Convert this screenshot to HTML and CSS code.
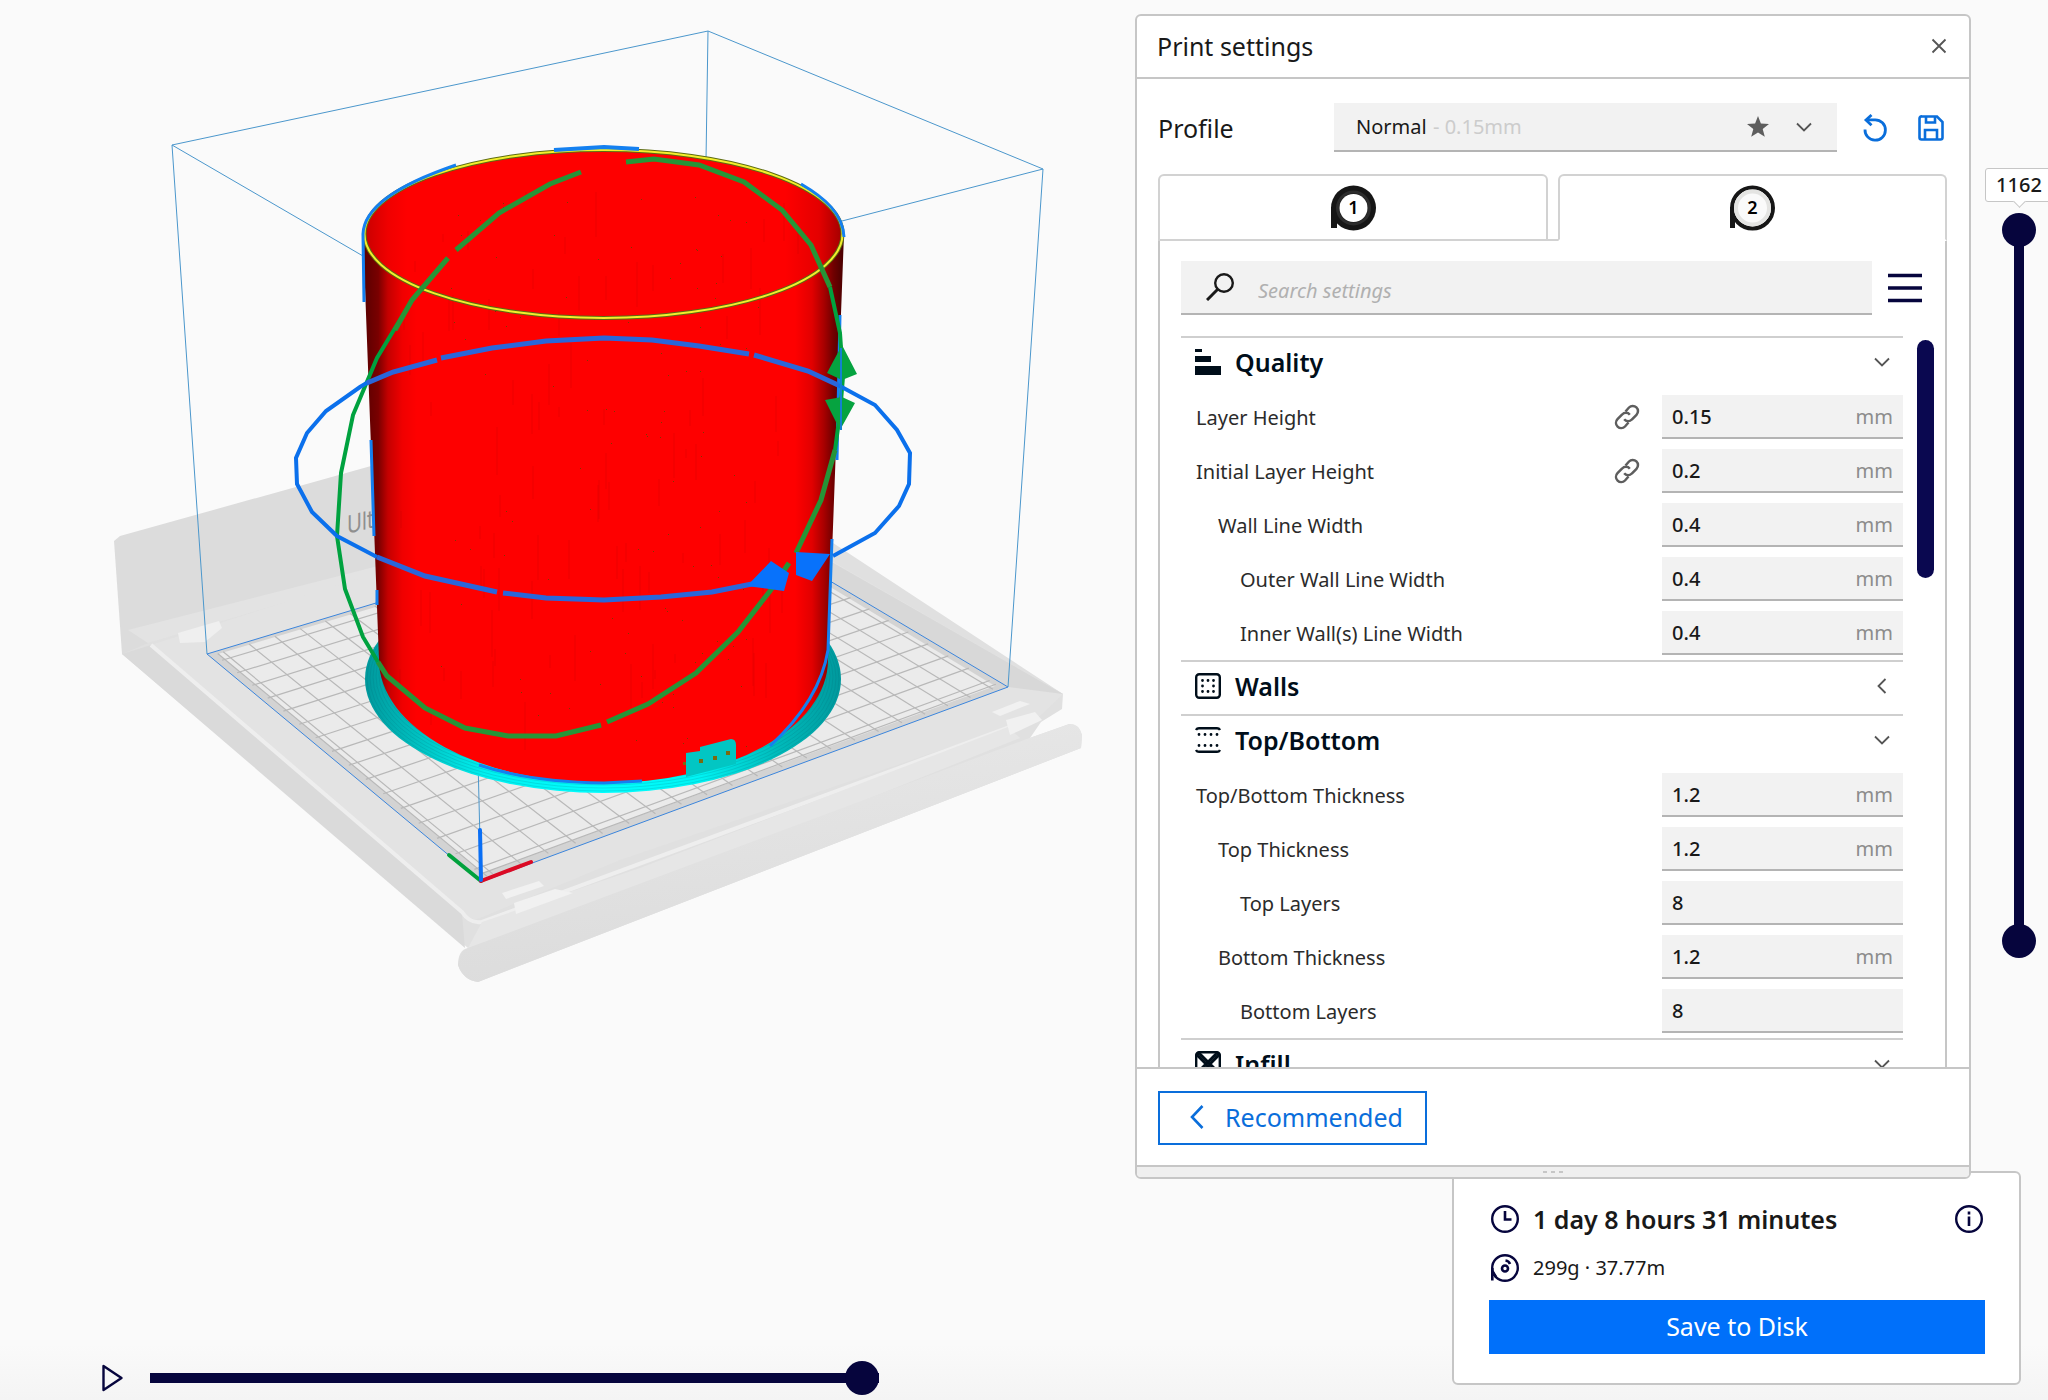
FILE: index.html
```html
<!DOCTYPE html>
<html lang="en">
<head>
<meta charset="utf-8">
<title>Print preview</title>
<link rel="stylesheet" href="styles.css">
</head>
<body>
<svg class="symbols" aria-hidden="true">
  <symbol id="chevron-down" viewBox="0 0 16 16"><path d="M1 4.500 8 11.500 15 4.500" fill="none" stroke="currentColor" stroke-width="1.800"/></symbol>
  <symbol id="chevron-left" viewBox="0 0 16 16"><path d="M11.500 1 4.500 8l7 7" fill="none" stroke="currentColor" stroke-width="1.800"/></symbol>
  <symbol id="link" viewBox="0 0 26 26"><g fill="none" stroke="currentColor" stroke-width="2.500"><path d="M11.500 7.500 15 3.500a5.200 5.200 0 0 1 7.500 7.300L17.800 15.500a5 5 0 0 1-7.600-.2"/><path d="M14.500 18.500 11 22.500a5.200 5.200 0 0 1-7.500-7.300L8.200 10.500a5 5 0 0 1 7.600.2"/></g></symbol>
</svg>
<main class="app">
  <section class="viewport" aria-label="Preview">
    <svg class="scene" viewBox="0 0 1135 1320" role="img" aria-label="Sliced cylinder on the build plate">
      <defs>
        <linearGradient id="wall" gradientUnits="userSpaceOnUse" x1="364" x2="843" y1="0" y2="0">
          <stop offset="0" stop-color="#5a0000"/><stop offset=".03" stop-color="#7a0000"/><stop offset=".05" stop-color="#c40000"/><stop offset=".08" stop-color="#f00000"/><stop offset=".11" stop-color="#fe0000"/>
          <stop offset=".9" stop-color="#fe0000"/><stop offset=".935" stop-color="#e20000"/><stop offset=".96" stop-color="#a80000"/><stop offset=".98" stop-color="#700000"/><stop offset="1" stop-color="#4a0000"/>
        </linearGradient>
        <linearGradient id="inside" gradientUnits="userSpaceOnUse" x1="364" x2="843" y1="0" y2="0">
          <stop offset="0" stop-color="#c80000"/><stop offset=".05" stop-color="#f00000"/><stop offset=".09" stop-color="#fe0000"/>
          <stop offset=".88" stop-color="#fe0000"/><stop offset=".95" stop-color="#e40000"/><stop offset="1" stop-color="#a00000"/>
        </linearGradient>
        <linearGradient id="brim" gradientUnits="userSpaceOnUse" x1="365" x2="842" y1="0" y2="0">
          <stop offset="0" stop-color="#00989c"/><stop offset=".12" stop-color="#00c4c4"/><stop offset=".25" stop-color="#00f0f0"/><stop offset=".5" stop-color="#00ffff"/>
          <stop offset=".7" stop-color="#00f4f4"/><stop offset=".86" stop-color="#00bcbc"/><stop offset="1" stop-color="#00989c"/>
        </linearGradient>
        <linearGradient id="bar" x1="0" y1="0" x2=".2" y2="1"><stop offset="0" stop-color="#e8e8e8"/><stop offset="1" stop-color="#dcdcdc"/></linearGradient>
        <clipPath id="body"><path d="M363 234A240 84 0 0 1 844 234L828 660A224 123 0 0 1 379 660Z"/></clipPath>
      </defs>

      <!-- print bed -->
      <path d="M122 654 114 541 120 536 371 466 400 560 400 700Z" fill="#dcdcdc"/>
      <path d="M128 630 378 566 378 620 151 645Z" fill="#e3e3e3"/>
      <path d="M122 654 151 642 700 480 830 541 1063 694 1062 709 1041 722 1030 738 1069 724Q1079 724 1082 735L1081 748 478 982Q463 980 458 965 458 950 468 948Z" fill="#e0e0e0"/>
      <path d="M151 645 370 575 830 560 1063 694 1040 716 620 860 475 920 462 913Z" fill="#e3e3e3"/>
      <path d="M122 654 151 645 462 913 465 948Z" fill="#dadada"/>
      <path d="M151 645 462 912Q470 924 482 922L1010 727" fill="none" stroke="#eeeeee" stroke-width="4"/>
      <path d="M482 922 640 868 1008 727 1020 738 640 890 468 948Z" fill="#e6e6e6"/>
      <path d="M468 948 1035 736 1070 724Q1080 724 1082 736L1081 748 478 982Q463 980 458 965 459 952 468 948Z" fill="url(#bar)"/>
      <path d="M830 561 1063 694 1008 687 830 581Z" fill="#d8d8d8"/>
      <path d="M502 893 539 881 544 886 506 899ZM514 903 555 889 573 893 516 914ZM992 712 1020 701 1030 704 1000 716ZM1006 720 1035 712 1042 720 1010 735Z" fill="#f1f1f1"/>
      <path d="M178 633 219 621 222 628 205 642 180 643Z" fill="#efefef"/>
      <path d="M207 654 702 505 1008 687 481 882Z" fill="#d3d3d3"/>
      <path d="M218 654 702 510 995 686 483 873Z" fill="#ebebeb"/>
      <g id="grid" fill="none" stroke="#b8b8b8" stroke-width="1.200"></g>
      <text class="brand" transform="matrix(1 -.25 0 1.250 347 534)">Ultimaker</text>

      <!-- build volume -->
      <g fill="none" stroke="#4b97cc">
        <path d="M172 145 708 31 1043 169 842 221M172 145 363 256M708 31 706 160M172 145 207 654M1043 169 1008 687M478 760 481 882"/>
        <path d="M376 603 207 654 481 882 1008 687 830 581" stroke="#3b85dc"/>
      </g>
      <g fill="none" stroke-width="4" stroke-linecap="round">
        <path d="M481 881 449 855" stroke="#00a13c"/><path d="M481 881 531 862" stroke="#dc0a24"/><path d="M481 880 480 830" stroke="#0a6ff5"/>
      </g>

      <!-- brim -->
      <ellipse cx="603" cy="679" rx="238" ry="114" fill="url(#brim)"/>
      <g id="brim-lines" fill="none" stroke="#006c72" stroke-opacity=".18"></g>

      <!-- sliced model -->
      <path d="M363 234 379 660A224 123 0 0 0 828 660L844 234Z" fill="url(#wall)"/>
      <ellipse cx="603.500" cy="234" rx="240" ry="84" fill="url(#inside)"/>
      <g id="layers" clip-path="url(#body)"></g>
      <ellipse cx="603.500" cy="234" rx="239" ry="84" fill="none" stroke="#5c6b10" stroke-width="4"/>
      <ellipse cx="603.500" cy="234" rx="239" ry="84" fill="none" stroke="#f3ee2c" stroke-width="2"/>
      <g fill="none" stroke="#1480f0" stroke-width="3">
        <path d="M554 150 604 147 639 149" stroke-width="4"/>
        <path d="M456 165C400 184 364 207 363 234L364 302M371 440 374 536M377 590V605"/>
        <path d="M801 184C825 198 843 214 844 237M840 315 837 460M832 539 828 650Q820 700 770 746"/>
        <path d="M479 765Q530 782 604 783L642 781"/>
      </g>
      <path d="M686 777V753L700 751V747L731 739Q736 739 736 745V764Z" fill="#02c6c3"/>
      <path d="M699 759h4v4h-4zM713 756h4v4h-4zM726 751h4v4h-4zM683 762h3v3h-3z" fill="#7a6a10"/>

      <!-- rotation rings -->
      <g fill="none" stroke="#00a23f" stroke-width="4">
        <path d="M412 300 377 358 353 415 341 473 337 536 345 589 363 637 378 662"/>
        <path d="M830 287 840 333 843 377 840 413 835 450"/>
      </g>
      <g fill="none" stroke="#269537" stroke-width="5">
        <path d="M378 662 387 676 425 708 465 728 508 736 556 736 601 725M607 722 648 704 696 673 738 632 770 591 789 563M796 553 821 500 835 450"/>
        <path d="M581 172 550 184 499 213 456 250M448 258 412 300 395 330M626 162 654 159 699 165 744 182 782 210 811 245 830 287"/>
      </g>
      <g fill="none" stroke="#0b70ec" stroke-width="4">
        <path d="M370 381 360 387 326 411 307 433 296 458 297 484 312 512 337 536 377 557M833 556 875 533 899 506 909 484 910 453 897 430 875 405 838 385"/>
      </g>
      <g fill="none" stroke="#2a66da" stroke-width="5">
        <path d="M377 557 425 576 497 592M503 593 546 598 604 600 661 597 712 592 757 583M838 385 808 371 754 355M749 354 699 346 652 340 604 338 546 341 492 348 441 358M437 360 393 372 367 383"/>
      </g>
      <path d="M771 561 789 573 784 591 747 586ZM796 552 830 554 812 581 796 575Z" fill="#0872fb"/>
      <path d="M842 345 857 374 842 380 827 373ZM825 400 842 397 855 403 840 430Z" fill="#06a340"/>
      <path d="M841 348V430" stroke="#1480d0" stroke-width="2"/>
    </svg>
    <div class="player">
      <button class="icon-button" type="button" aria-label="Play">
        <svg class="play" viewBox="0 0 24 28"><path d="M3 2v24L21 14Z" fill="none" stroke="currentColor" stroke-width="2.400" stroke-linejoin="round"/></svg>
      </button>
      <input class="range path-range" type="range" min="0" max="100" value="100" aria-label="Path position">
    </div>
  </section>

  <div class="side">
    <section class="panel settings" aria-labelledby="settings-title">
      <header class="settings-head">
        <h1 class="title" id="settings-title">Print settings</h1>
        <button class="icon-button muted" type="button" aria-label="Close">
          <svg class="icon-small" viewBox="0 0 16 16"><path d="M1.500 1.500l13 13M14.500 1.500l-13 13" fill="none" stroke="currentColor" stroke-width="1.800"/></svg>
        </button>
      </header>

      <div class="profile">
        <label class="title profile-label" for="profile">Profile</label>
        <div class="profile-field">
          <select class="profile-select" id="profile"><option>Normal</option><option>Fine</option><option>Draft</option></select>
          <span class="profile-detail">- 0.15mm</span>
          <span class="profile-icons">
            <svg class="star" viewBox="0 0 22 22"><path d="M11 0l2.900 7.500 8.100.4-6.300 5.100 2.100 7.800L11 16.400l-6.800 4.400 2.100-7.800L0 7.900l8.100-.4Z" fill="currentColor"/></svg>
            <svg class="icon-small"><use href="#chevron-down"/></svg>
          </span>
        </div>
        <button class="icon-button blue" type="button" aria-label="Reset profile">
          <svg class="icon" viewBox="0 0 26 28"><g fill="none" stroke="currentColor" stroke-width="2.800"><path d="M3 15.500a10.200 10.200 0 1 0 10.200-9.700H4"/><path d="M9.500 1 4 6l5.500 5.200"/></g></svg>
        </button>
        <button class="icon-button blue" type="button" aria-label="Save profile">
          <svg class="icon" viewBox="0 0 26 28"><g fill="none" stroke="currentColor" stroke-width="2.600"><path d="M4 2.500H19L24.500 8V23.500a2 2 0 0 1-2 2H3.500a2 2 0 0 1-2-2V4.500a2 2 0 0 1 2.500-2Z"/><path d="M8 3v5.500h9V3M7 25v-9h12v9"/></g></svg>
        </button>
      </div>

      <div class="tabs" role="tablist">
        <button class="tab" type="button" role="tab" aria-selected="false" aria-label="Extruder 1">
          <svg class="spool" viewBox="0 0 46 46"><path d="M1 43V22h6v21Z" fill="#161616"/><circle cx="23.500" cy="23" r="22.500" fill="#161616"/><circle cx="23.500" cy="23" r="16" fill="none" stroke="#2c2c2c" stroke-width="3"/><circle cx="23.500" cy="23" r="14" fill="#fff"/><text class="spool-no" x="23.500" y="29">1</text></svg>
        </button>
        <span class="tab-gap"></span>
        <button class="tab tab-on" type="button" role="tab" aria-selected="true" aria-label="Extruder 2">
          <svg class="spool" viewBox="0 0 46 46"><path d="M1 43V22h5v21Z" fill="#161616"/><circle cx="23.500" cy="23" r="20.500" fill="#fafafa" stroke="#161616" stroke-width="4"/><circle cx="23.500" cy="23" r="16.500" fill="none" stroke="#e4e4e2" stroke-width="4"/><text class="spool-no" x="23.500" y="29">2</text></svg>
        </button>
      </div>

      <div class="sheet">
        <div class="search-row">
          <label class="search">
            <svg class="search-icon" viewBox="0 0 28 28"><circle cx="18" cy="10" r="8.800" fill="none" stroke="currentColor" stroke-width="2.400"/><path d="M11.500 16.500 1 27" stroke="currentColor" stroke-width="3"/></svg>
            <input class="search-input" type="text" placeholder="Search settings" aria-label="Search settings">
          </label>
          <button class="icon-button navy" type="button" aria-label="Visibility menu">
            <svg class="burger" viewBox="0 0 34 30"><path d="M0 2.500H34M0 15H34M0 27.500H34" stroke="currentColor" stroke-width="3.600"/></svg>
          </button>
        </div>

        <div class="list-wrap">
          <div class="list">
            <button class="category" type="button" aria-expanded="true">
              <svg class="cat-icon" viewBox="0 0 26 26"><path d="M0 0h7v3H0zM0 7h16v6H0zM0 17h26v9H0z" fill="currentColor"/></svg>
              <span class="cat-name">Quality</span><svg class="icon-small"><use href="#chevron-down"/></svg>
            </button>
            <div class="row"><label class="name" for="s1">Layer Height</label><svg class="link"><use href="#link"/></svg><span class="field"><input class="value" id="s1" value="0.15"><span class="unit">mm</span></span></div>
            <div class="row"><label class="name" for="s2">Initial Layer Height</label><svg class="link"><use href="#link"/></svg><span class="field"><input class="value" id="s2" value="0.2"><span class="unit">mm</span></span></div>
            <div class="row"><label class="name in-1" for="s3">Wall Line Width</label><span class="field"><input class="value" id="s3" value="0.4"><span class="unit">mm</span></span></div>
            <div class="row"><label class="name in-2" for="s4">Outer Wall Line Width</label><span class="field"><input class="value" id="s4" value="0.4"><span class="unit">mm</span></span></div>
            <div class="row"><label class="name in-2" for="s5">Inner Wall(s) Line Width</label><span class="field"><input class="value" id="s5" value="0.4"><span class="unit">mm</span></span></div>
            <button class="category" type="button" aria-expanded="false">
              <svg class="cat-icon" viewBox="0 0 26 26"><rect x="1.200" y="1.200" width="23.600" height="23.600" rx="3" fill="none" stroke="currentColor" stroke-width="2.400"/><path d="M7.500 7.500h.01M13 7.500h.01M18.500 7.500h.01M7.500 13h.01M18.500 13h.01M7.500 18.500h.01M13 18.500h.01M18.500 18.500h.01" stroke="currentColor" stroke-width="2.800" stroke-linecap="round"/></svg>
              <span class="cat-name">Walls</span><svg class="icon-small"><use href="#chevron-left"/></svg>
            </button>
            <button class="category" type="button" aria-expanded="true">
              <svg class="cat-icon" viewBox="0 0 26 26"><path d="M1 3Q2 1.200 4 1.200H22Q24 1.200 25 3M1 23Q2 24.800 4 24.800H22Q24 24.800 25 23" fill="none" stroke="currentColor" stroke-width="2.400"/><path d="M4 7.500h.01M10 7.500h.01M16 7.500h.01M22 7.500h.01M4 18.500h.01M10 18.500h.01M16 18.500h.01M22 18.500h.01" stroke="currentColor" stroke-width="2.800" stroke-linecap="round"/></svg>
              <span class="cat-name">Top/Bottom</span><svg class="icon-small"><use href="#chevron-down"/></svg>
            </button>
            <div class="row"><label class="name" for="s6">Top/Bottom Thickness</label><span class="field"><input class="value" id="s6" value="1.2"><span class="unit">mm</span></span></div>
            <div class="row"><label class="name in-1" for="s7">Top Thickness</label><span class="field"><input class="value" id="s7" value="1.2"><span class="unit">mm</span></span></div>
            <div class="row"><label class="name in-2" for="s8">Top Layers</label><span class="field"><input class="value" id="s8" value="8"></span></div>
            <div class="row"><label class="name in-1" for="s9">Bottom Thickness</label><span class="field"><input class="value" id="s9" value="1.2"><span class="unit">mm</span></span></div>
            <div class="row"><label class="name in-2" for="s10">Bottom Layers</label><span class="field"><input class="value" id="s10" value="8"></span></div>
            <button class="category" type="button" aria-expanded="true">
              <svg class="cat-icon" viewBox="0 0 26 26"><rect x="1.200" y="1.200" width="23.600" height="23.600" rx="3" fill="none" stroke="currentColor" stroke-width="2.400"/><path d="M1 5 5 1M3 21 21 3M3 5 21 23M5 3 23 21M21 1 25 5M5 23 23 5" stroke="currentColor" stroke-width="2.800"/></svg>
              <span class="cat-name">Infill</span><svg class="icon-small"><use href="#chevron-down"/></svg>
            </button>
          </div>
          <div class="scroll-thumb"></div>
        </div>
      </div>

      <footer class="settings-foot">
        <button class="recommended" type="button">
          <svg class="back" viewBox="0 0 14 24"><path d="M12.500 1 2 12 12.500 23" fill="none" stroke="currentColor" stroke-width="2.600"/></svg>Recommended
        </button>
      </footer>
      <div class="grip"><i class="dot"></i><i class="dot"></i><i class="dot"></i></div>
    </section>

    <section class="panel output" aria-label="Print output">
      <div class="output-row">
        <svg class="info-icon" viewBox="0 0 28 28"><circle cx="14" cy="14" r="12.800" fill="none" stroke="currentColor" stroke-width="2.400"/><path d="M14 6v8.500h6.500" fill="none" stroke="currentColor" stroke-width="2.600"/></svg>
        <strong class="time">1 day 8 hours 31 minutes</strong>
        <button class="icon-button navy" type="button" aria-label="Details">
          <svg class="info-icon" viewBox="0 0 28 28"><circle cx="14" cy="14" r="12.800" fill="none" stroke="currentColor" stroke-width="2.400"/><path d="M14 11.500V21M14 6.500v3" stroke="currentColor" stroke-width="2.600"/></svg>
        </button>
      </div>
      <div class="output-row">
        <svg class="info-icon" viewBox="0 0 28 28"><circle cx="14" cy="14" r="12.800" fill="none" stroke="currentColor" stroke-width="2.400"/><path d="M1.300 14V26.500M1.300 17 5 23" fill="none" stroke="currentColor" stroke-width="2.600"/><circle cx="14" cy="14.500" r="3" fill="none" stroke="currentColor" stroke-width="2.600"/><path d="M14.500 6.500Q18 7 19 10" fill="none" stroke="currentColor" stroke-width="2.600"/></svg>
        <span class="material">299g · 37.77m</span>
      </div>
      <button class="save" type="button">Save to Disk</button>
    </section>
  </div>

  <aside class="layers" aria-label="Layers">
    <output class="layer-no">1162</output>
    <div class="layer-range">
      <input class="range vertical" type="range" min="1" max="1162" value="1162" aria-label="Top layer">
      <input class="range vertical" type="range" min="1" max="1162" value="1" aria-label="Bottom layer">
    </div>
  </aside>
</main>
<script src="scene.js"></script>
</body>
</html>
```
FILE: styles.css
```css
* { box-sizing: border-box; }

body {
  margin: 0;
  overflow: hidden;
  background: linear-gradient(#fafafa 0, #fafafa 96%, #f4f4f4 100%);
  color: #191919;
  font-family: "Noto Sans", "Open Sans", sans-serif;
  font-size: 20px;
}

button, input, select {
  margin: 0;
  padding: 0;
  border: 0;
  border-radius: 0;
  background: none;
  color: inherit;
  font: inherit;
}

svg { display: block; flex: none; }
.symbols { display: none; }

.app {
  display: grid;
  grid-template-columns: minmax(0, 1135fr) minmax(0, 836fr) 77px;
  height: 100vh;
}

/* preview */
.viewport { display: flex; flex-direction: column; justify-content: space-between; min-height: 0; }
.scene { width: 100%; }
.brand { font-family: Inter, sans-serif; font-size: 20px; fill: #8f8f8f; }
.player { display: flex; align-items: center; gap: 25px; padding: 0 256px 5px 100px; }
.play { width: 25px; height: 28px; color: #06053d; }

.icon-button { display: grid; place-items: center; flex: none; }
.muted { color: #555; }
.blue { color: #0a6edb; }
.navy { color: #06053d; }

.range { appearance: none; margin: 0; cursor: pointer; }
.range::-webkit-slider-thumb {
  appearance: none;
  width: 34px;
  height: 34px;
  border-radius: 50%;
  background: #06053d;
  pointer-events: auto;
}
.path-range { flex: 1; min-width: 0; height: 34px; }
.path-range::-webkit-slider-runnable-track {
  height: 34px;
  border-radius: 4px;
  background: linear-gradient(#06053d, #06053d) center / 100% 10px no-repeat;
}

/* panels */
.side { display: flex; flex-direction: column; height: 100vh; padding: 14px 0 15px; }
.panel { border: 2px solid #c6c6c6; border-radius: 6px; background: #fff; }
.settings {
  position: relative;
  z-index: 1;
  display: flex;
  flex: 1;
  flex-direction: column;
  min-height: 0;
  overflow: hidden;
}
.settings-head {
  display: flex;
  align-items: center;
  justify-content: space-between;
  height: 63px;
  padding: 0 22px 2px 20px;
  border-bottom: 2px solid #c6c6c6;
}
.title { margin: 0; font-size: 25px; font-weight: 400; }
.icon-small { width: 16px; height: 16px; color: #555; }

.profile { display: flex; align-items: center; padding: 24px 24px 22px 21px; }
.profile-label { width: 176px; }
.profile-field { position: relative; flex: 1; height: 49px; margin-right: 25px; border-bottom: 2px solid #b4b4b4; background: #f2f2f2; }
.profile-select { appearance: none; width: 100%; height: 100%; padding-left: 22px; outline: 0; }
.profile-detail { position: absolute; top: 0; left: 99px; line-height: 47px; color: #ccc; pointer-events: none; }
.profile-icons { position: absolute; top: 0; right: 25px; display: flex; align-items: center; gap: 27px; height: 47px; pointer-events: none; }
.star { width: 22px; height: 22px; color: #5e5e5e; }
.icon { width: 26px; height: 28px; }
.blue + .blue { margin-left: 30px; margin-right: 1px; }

.tabs { display: flex; margin: 0 22px 0 21px; height: 67px; }
.tab { display: grid; flex: 1; place-items: center; border: 2px solid #d2d2d2; border-radius: 6px 6px 0 0; }
.tab-on { border-bottom-color: transparent; }
.tab-gap { width: 10px; border-bottom: 2px solid #d2d2d2; }
.spool { width: 46px; height: 46px; }
.spool-no { font-size: 18px; font-weight: 600; text-anchor: middle; }

.sheet {
  display: flex;
  flex: 1;
  flex-direction: column;
  min-height: 0;
  margin: 0 22px 0 21px;
  padding: 20px 11px 0 21px;
  border: solid #c6c6c6;
  border-width: 0 2px;
}
.search-row { display: flex; align-items: center; gap: 16px; padding-right: 12px; }
.search { display: flex; flex: 1; align-items: center; gap: 24px; height: 54px; padding-left: 25px; border-bottom: 2px solid #b4b4b4; background: #f2f2f2; }
.search-icon { width: 28px; height: 28px; }
.search-input { flex: 1; min-width: 0; height: 100%; padding-top: 6px; outline: 0; }
.search-input::placeholder { color: #b0b0b0; font-style: italic; opacity: 1; }
.burger { width: 34px; height: 30px; }

.list-wrap { display: flex; flex: 1; gap: 14px; min-height: 0; padding-top: 21px; }
.list { flex: 1; min-width: 0; overflow: hidden; }
.scroll-thumb { width: 17px; height: 238px; margin-top: 4px; border-radius: 9px; background: #0a0850; }

.category {
  display: flex;
  align-items: center;
  width: 100%;
  height: 54px;
  padding: 0 13px 4px 14px;
  border-top: 2px solid #cfcfcf;
  color: #000e1a;
  text-align: left;
}
.cat-icon { width: 26px; height: 26px; }
.cat-name { flex: 1; padding-left: 14px; font-size: 25px; font-weight: 600; }

.row { display: flex; align-items: center; height: 54px; }
.name { flex: 1; padding-left: 15px; color: #2b2b2b; }
.in-1 { padding-left: 37px; }
.in-2 { padding-left: 59px; }
.link { width: 26px; height: 26px; margin-right: 22px; color: #5e5e5e; }
.field { display: flex; align-items: center; width: 241px; height: 44px; padding: 0 10px; border-bottom: 2px solid #b4b4b4; background: #f2f2f2; }
.value { flex: 1; min-width: 0; font-weight: 500; outline: 0; }
.unit { color: #8c8c8c; }

.settings-foot { padding: 22px 21px 20px; border-top: 2px solid #c6c6c6; }
.recommended { display: flex; align-items: center; gap: 21px; height: 54px; padding: 0 22px 2px 30px; border: 2px solid #0a6edb; color: #0a6edb; font-size: 25px; }
.back { width: 14px; height: 24px; }
.grip { display: flex; align-items: center; justify-content: center; gap: 4px; height: 12px; border-top: 2px solid #c6c6c6; background: #efefef; }
.dot { width: 4px; height: 2px; background: #c6c6c6; }

.output { margin: -8px -50px 0 317px; padding: 28px 34px 29px 35px; }
.output-row { display: flex; align-items: center; gap: 14px; padding: 0 2px; }
.output-row + .output-row { margin: 17px 0 18px; }
.info-icon { width: 28px; height: 28px; color: #06053d; }
.time { flex: 1; font-size: 25px; font-weight: 600; line-height: 36px; }
.material { line-height: 28px; }
.save { width: 100%; height: 54px; padding-bottom: 2px; background: #0070fa; color: #fff; font-size: 25px; }

/* layer slider */
.layers { display: flex; flex-direction: column; align-items: center; padding: 168px 0 0 19px; }
.layer-no {
  position: relative;
  flex: none;
  width: 68px;
  margin-bottom: 11px;
  border: 1px solid #c6c6c6;
  border-radius: 3px;
  background: #fff;
  font-weight: 500;
  line-height: 32px;
  text-align: center;
}
.layer-no::after {
  content: "";
  position: absolute;
  top: 28px;
  left: 29px;
  width: 8px;
  height: 8px;
  border: solid #c6c6c6;
  border-width: 0 1px 1px 0;
  background: #fff;
  transform: rotate(45deg);
}
.layer-range {
  display: grid;
  width: 34px;
  height: calc(100vh - 655px);
  background: linear-gradient(#06053d, #06053d) center / 10px 94% no-repeat;
}
.vertical { grid-area: 1 / 1; width: 34px; height: 100%; background: none; writing-mode: vertical-lr; direction: rtl; pointer-events: none; }
```
FILE: scene.js
```js
const NS = "http://www.w3.org/2000/svg";

function add(parent, tag, attrs) {
  const el = document.createElementNS(NS, tag);
  for (const key in attrs) el.setAttribute(key, attrs[key]);
  parent.appendChild(el);
}

// Projects the unit square onto the four corners of the build plate.
function projector([p0, p1, p2, p3]) {
  const sx = p0[0] - p1[0] + p2[0] - p3[0], sy = p0[1] - p1[1] + p2[1] - p3[1];
  const dx1 = p1[0] - p2[0], dx2 = p3[0] - p2[0], dy1 = p1[1] - p2[1], dy2 = p3[1] - p2[1];
  const det = dx1 * dy2 - dx2 * dy1;
  const g = (sx * dy2 - dx2 * sy) / det, h = (dx1 * sy - sx * dy1) / det;
  const a = p1[0] - p0[0] + g * p1[0], b = p3[0] - p0[0] + h * p3[0];
  const d = p1[1] - p0[1] + g * p1[1], e = p3[1] - p0[1] + h * p3[1];
  return (u, v) => {
    const w = g * u + h * v + 1;
    return ((a * u + b * v + p0[0]) / w).toFixed(1) + " " + ((d * u + e * v + p0[1]) / w).toFixed(1);
  };
}

const at = projector([[481, 882], [1008, 687], [702, 505], [207, 654]]);
const grid = document.getElementById("grid");
const line = (a, b) => add(grid, "path", { d: "M" + a + "L" + b });
for (let i = 0; i <= 20; i++) { const u = 0.025 + i * 0.95 / 20; line(at(u, 0.01), at(u, 0.99)); }
for (let i = 0; i <= 15; i++) { const v = 0.04 + i * 0.92 / 15; line(at(0.01, v), at(0.99, v)); }
line(at(0.015, 0.01), at(0.015, 0.99));
line(at(0.01, 0.022), at(0.99, 0.022));

const brim = document.getElementById("brim-lines");
for (let i = 0; i < 6; i++) add(brim, "ellipse", { cx: 603, cy: 679 - i, rx: 236 - i * 3, ry: 112 - i * 2 });

// Faint vertical seams and specks left by the layers.
const layers = document.getElementById("layers");
let seed = 7;
const rnd = () => (seed = (seed * 16807) % 2147483647) / 2147483647;
for (let i = 0; i < 90; i++) {
  add(layers, "path", { d: "M" + Math.round(400 + rnd() * 400) + " " + Math.round(190 + rnd() * 520) + "v" + Math.round(8 + rnd() * 40), stroke: "#c40000", "stroke-opacity": 0.3 });
}
for (let i = 0; i < 110; i++) {
  add(layers, "rect", { x: Math.round(440 + rnd() * 320), y: Math.round(190 + rnd() * 570), width: 1, height: 1, fill: "#7a3a00" });
}
```
